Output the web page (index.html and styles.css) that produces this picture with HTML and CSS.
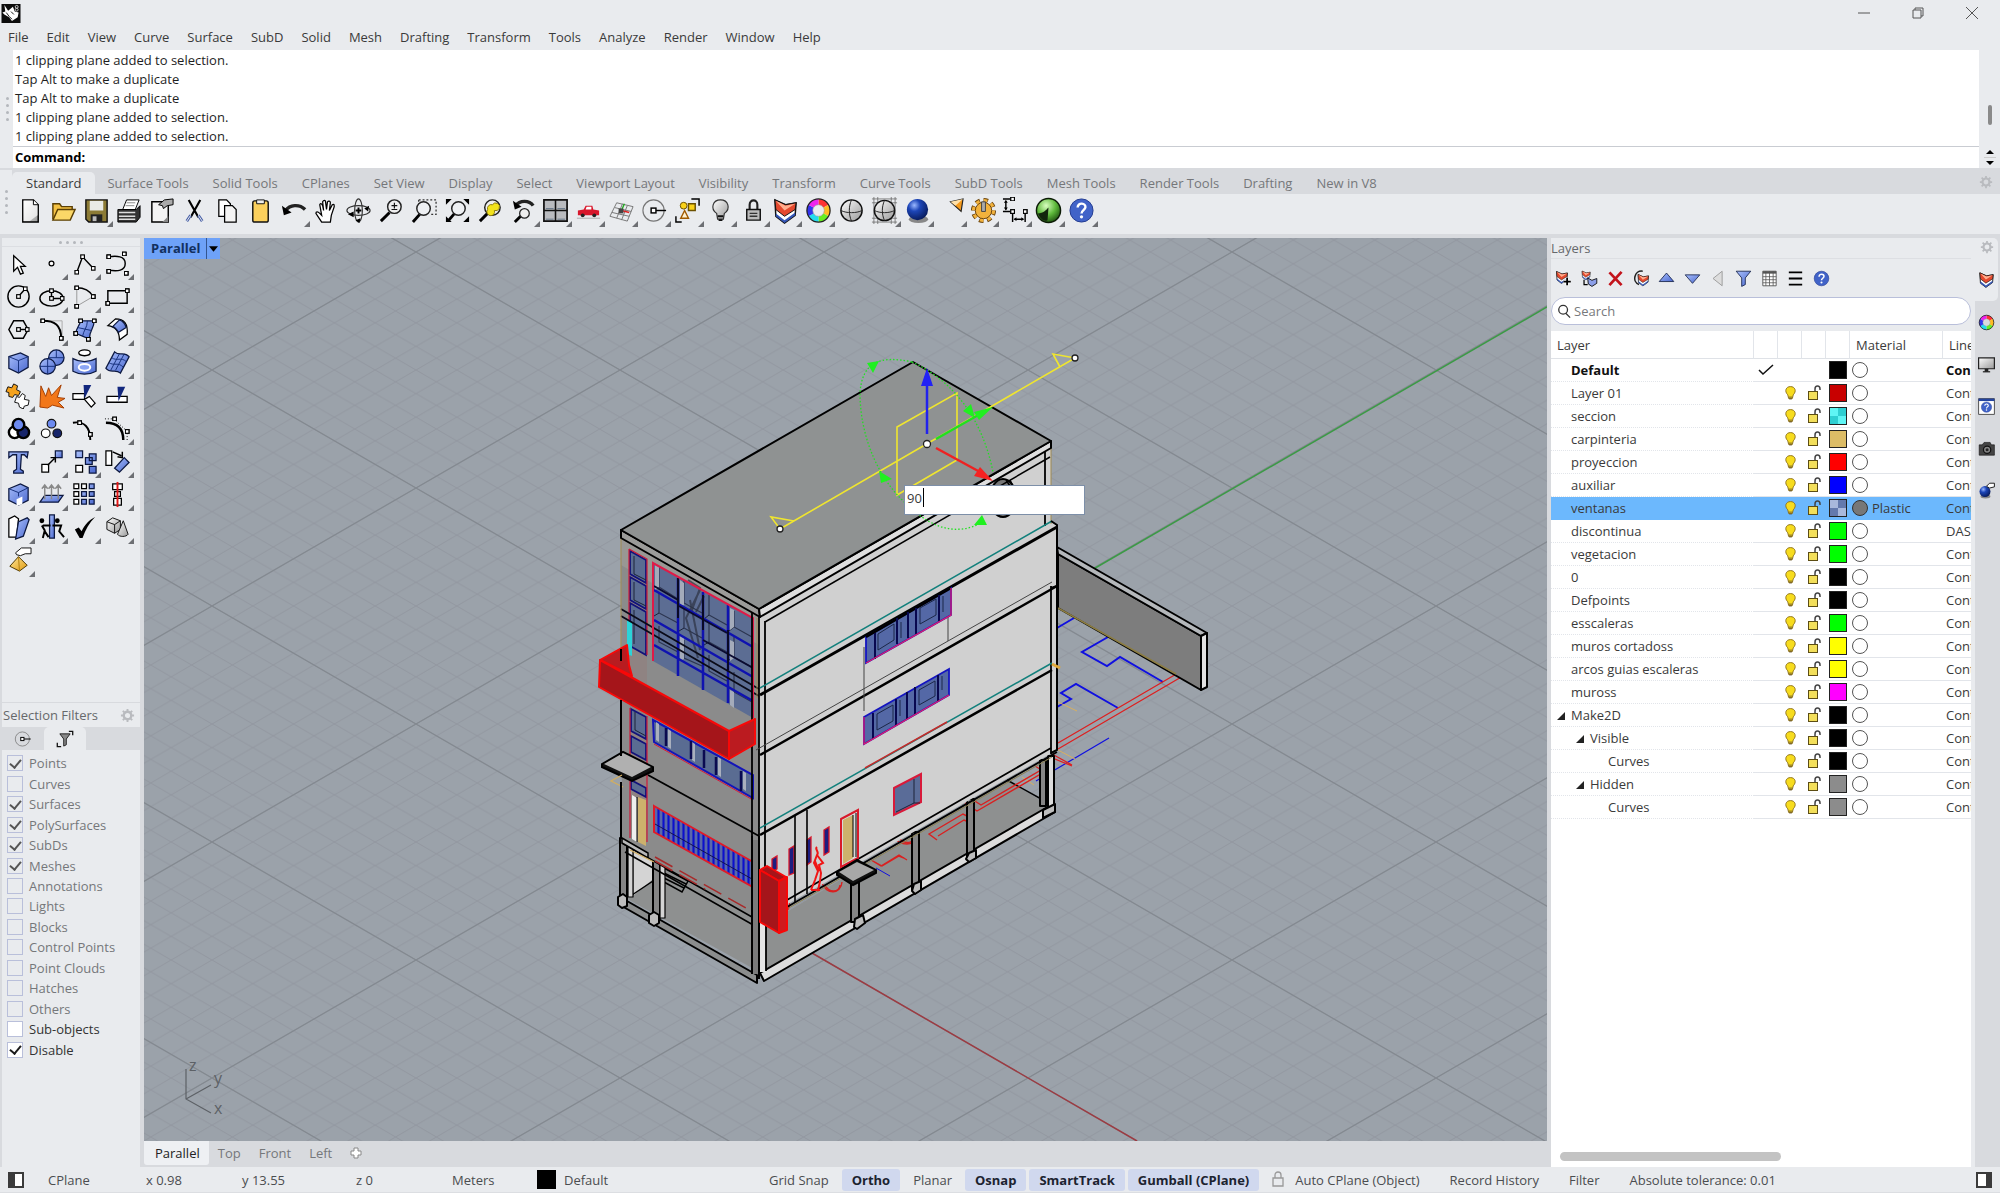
FILE: index.html
```html
<!DOCTYPE html>
<html lang="en">
<head>
  <meta charset="UTF-8">
  <meta name="viewport" content="width=device-width, initial-scale=1.0">
  <title>Rhino 8</title>
  <link rel="stylesheet" href="styles.css">
</head>
<body>

  <!-- Shared symbols -->
  <svg class="defs" aria-hidden="true">
    <defs>
      <marker id="node" viewBox="0 0 5 5" refX="2.5" refY="2.5" markerWidth="5" markerHeight="5" markerUnits="userSpaceOnUse">
        <rect x="0.6" y="0.6" width="3.8" height="3.8" fill="#fff" stroke="#000" stroke-width="1.2"/>
      </marker>
      <linearGradient id="blue" x1="0" y1="0" x2="1" y2="1"><stop offset="0" stop-color="#a9bffb"/><stop offset="1" stop-color="#4a68cf"/></linearGradient>
      <linearGradient id="grey" x1="0" y1="0" x2="1" y2="1"><stop offset="0" stop-color="#fff"/><stop offset="1" stop-color="#999"/></linearGradient>
      <linearGradient id="gold" x1="0" y1="0" x2="1" y2="1"><stop offset="0" stop-color="#ffe89a"/><stop offset="1" stop-color="#e09a10"/></linearGradient>
      <radialGradient id="ball" cx="0.35" cy="0.3" r="0.8"><stop offset="0" stop-color="#9bb8ff"/><stop offset="0.35" stop-color="#1d46b8"/><stop offset="1" stop-color="#04144e"/></radialGradient>
      <radialGradient id="green" cx="0.4" cy="0.3" r="0.8"><stop offset="0" stop-color="#d9ffc0"/><stop offset="0.5" stop-color="#5db83a"/><stop offset="1" stop-color="#123d08"/></radialGradient>
      <symbol id="i-gear" viewBox="0 0 16 16">
        <circle cx="8" cy="8" r="4" fill="none" stroke="#b9bbbf" stroke-width="2.5"/>
        <path d="M8 1v3M8 12v3M1 8h3M12 8h3M3 3l2 2M11 11l2 2M3 13l2-2M11 5l2-2" stroke="#b9bbbf" stroke-width="2"/>
      </symbol>
      <symbol id="i-layer" viewBox="0 0 28 28">
        <path d="M3 3l11 5 11-2-1 13-11 8-9-7z" fill="#fff" stroke="#111" stroke-width="1.500"/>
        <path d="M4 17l9 7 11-8v3l-11 8-9-7z" fill="#3355b5"/>
        <path d="M3 3l11 5 11-2-1 7-11 7-9-7z" fill="#e5492e" stroke="#111"/>
        <path d="M4 4l10 5 10-2-11 7z" fill="#ffae8e"/>
      </symbol>
      <symbol id="i-wheel" viewBox="0 0 28 28">
        <g fill="none" stroke-width="6">
          <path d="M14 5a9 9 0 0 1 7.800 4.500" stroke="#f33"/><path d="M21.800 9.500a9 9 0 0 1 0 9" stroke="#fb2"/>
          <path d="M21.800 18.500a9 9 0 0 1-7.800 4.500" stroke="#6e2"/><path d="M14 23a9 9 0 0 1-7.800-4.500" stroke="#2de"/>
          <path d="M6.200 18.500a9 9 0 0 1 0-9" stroke="#33e"/><path d="M6.200 9.500a9 9 0 0 1 7.800-4.500" stroke="#e2e"/>
        </g>
        <circle cx="14" cy="14" r="12" fill="none" stroke="#222" stroke-width="1.300"/>
        <circle cx="14" cy="14" r="6" fill="none" stroke="#999" stroke-width="0.600"/>
      </symbol>
      <symbol id="i-help" viewBox="0 0 28 28">
        <circle cx="14" cy="14" r="12" fill="#4163c8" stroke="#243c90"/>
        <path d="M10 11c0-6 9-5 8 0-.5 2.500-4 3-4 6" fill="none" stroke="#fff" stroke-width="2.500"/><circle cx="14" cy="20.500" r="1.700" fill="#fff"/>
      </symbol>
      <symbol id="i-ball" viewBox="0 0 28 28">
        <ellipse cx="15" cy="23" rx="10" ry="4" fill="#888"/><circle cx="14" cy="13" r="11" fill="url(#ball)"/>
      </symbol>
      <symbol id="i-osnap" viewBox="0 0 28 28">
        <circle cx="13" cy="14" r="11" fill="none" stroke="#777" stroke-width="1.200"/><path d="M13 14h13" stroke="#000" stroke-width="1.500"/>
        <rect x="10.500" y="11.500" width="5" height="5" fill="#fff" stroke="#000" stroke-width="1.500"/>
      </symbol>
      <symbol id="i-bulb" viewBox="0 0 12 16">
        <path d="M3 10C-1 6 1 1 6 1s7 5 3 9l-1 4H4z" fill="#f7dc1e" stroke="#8a6d1a"/><path d="M4 12.500h4M4.500 14.500h3" stroke="#6c5a2a"/>
      </symbol>
      <symbol id="i-unlock" viewBox="0 0 16 16">
        <path d="M9 7V4c0-4 5-4 5 0v1" fill="none" stroke="#444" stroke-width="1.500"/><rect x="2.500" y="6.500" width="9" height="8" fill="#f3df5a" stroke="#5c4d14"/>
      </symbol>
    </defs>
  </svg>

  <!-- Title bar -->
  <header class="titlebar">
    <svg class="logo" viewBox="0 0 20 20"><rect width="20" height="20" fill="#0c0c0c"/><path d="M3 1l4 6 5-4 2 5 4 1-1 5-6 4-3-4-5-3-2-2 3-1z" fill="#fff"/><path d="M5 9l3 4 3 3M10 8l3 3" stroke="#111" fill="none"/><circle cx="16" cy="3" r="1.500" fill="none" stroke="#ccc"/><circle cx="16" cy="6" r="1.500" fill="none" stroke="#ccc"/></svg>
    <div class="window-buttons">
      <button aria-label="Minimize"><svg viewBox="0 0 14 14"><path d="M1 7h12"/></svg></button>
      <button aria-label="Restore"><svg viewBox="0 0 14 14"><path d="M2 4h8v8H2zM4 4V2h8v8h-2"/></svg></button>
      <button aria-label="Close"><svg viewBox="0 0 14 14"><path d="M1 1l12 12M13 1L1 13"/></svg></button>
    </div>
  </header>

  <nav class="menu">
    <a href="#">File</a><a href="#">Edit</a><a href="#">View</a><a href="#">Curve</a><a href="#">Surface</a><a href="#">SubD</a><a href="#">Solid</a><a href="#">Mesh</a><a href="#">Drafting</a><a href="#">Transform</a><a href="#">Tools</a><a href="#">Analyze</a><a href="#">Render</a><a href="#">Window</a><a href="#">Help</a>
  </nav>

  <!-- Command history -->
  <section class="command">
    <div class="grip"><i></i><i></i><i></i><i></i></div>
    <div class="command-main">
      <div class="history">
        <p>1 clipping plane added to selection.</p>
        <p>Tap Alt to make a duplicate</p>
        <p>Tap Alt to make a duplicate</p>
        <p>1 clipping plane added to selection.</p>
        <p>1 clipping plane added to selection.</p>
      </div>
      <div class="prompt"><label for="command-line">Command:</label><input type="text" id="command-line"></div>
    </div>
    <div class="command-scroll">
      <span class="thumb"></span>
      <svg viewBox="0 0 12 20"><path d="M0 9.500h12" stroke="#ccc"/><path d="M2 6l4-4 4 4zM2 13l4 4 4-4z"/></svg>
    </div>
  </section>

  <!-- Toolbars -->
  <section class="toolbars">
    <div class="grip"><i></i><i></i><i></i><i></i></div>
    <div class="toolbars-main">
      <div class="tabs">
        <button class="tab active">Standard</button><button class="tab">Surface Tools</button><button class="tab">Solid Tools</button><button class="tab">CPlanes</button><button class="tab">Set View</button><button class="tab">Display</button><button class="tab">Select</button><button class="tab">Viewport Layout</button><button class="tab">Visibility</button><button class="tab">Transform</button><button class="tab">Curve Tools</button><button class="tab">SubD Tools</button><button class="tab">Mesh Tools</button><button class="tab">Render Tools</button><button class="tab">Drafting</button><button class="tab">New in V8</button>
        <svg class="tab-gear"><use href="#i-gear"/></svg>
      </div>
      <div class="toolbar">
        <button class="tool" aria-label="New"><svg viewBox="0 0 28 28"><path d="M6 3h11l5 5v18H6z" fill="url(#grey)" stroke="#000" stroke-width="1.500"/><path d="M6.800 3.800h9.500l5 5v10l-8 6h-6.500z" fill="#fff" opacity=".7"/><path d="M17 3v5h5" fill="#fff" stroke="#000"/></svg></button>
        <button class="tool" aria-label="Open"><svg viewBox="0 0 28 28"><path d="M3 23V7h7l2 3h11v4" fill="#f5c243" stroke="#5a3f05" stroke-width="1.500"/><path d="M3 24l5-11h18l-5 11z" fill="#fbd767" stroke="#5a3f05" stroke-width="1.500"/></svg></button>
        <button class="tool more" aria-label="Save"><svg viewBox="0 0 28 28"><path d="M3 3h22v23H6l-3-3z" fill="#8c7b35" stroke="#111" stroke-width="1.500"/><path d="M7 4h14v10H7z" fill="#e9ebe6"/><path d="M8 18h12v8H8z" fill="#222"/><path d="M10 20h4v5h-4z" fill="#bbb"/></svg></button>
        <button class="tool" aria-label="Print"><svg viewBox="0 0 28 28"><path d="M8 13l4-10h13l-4 10z" fill="#fff" stroke="#000"/><path d="M12 6h9M11 9h9" stroke="#888"/><path d="M3 13h19l4-4v12l-4 5H3z" fill="#333" stroke="#000"/><path d="M4 16h17M4 20h17M4 23h17" stroke="#ddd" stroke-width="1.500"/></svg></button>
        <button class="tool" aria-label="Document properties"><svg viewBox="0 0 28 28"><path d="M4 5h17v21H4z" fill="#f4f4f4" stroke="#000" stroke-width="1.500"/><path d="M21 20l-6 6h6z" fill="#888"/><path d="M11 8l6-5 9-1v6l-6 1-4 3-1-3z" fill="#aaa" stroke="#000"/></svg></button>
        <button class="tool" aria-label="Cut"><svg viewBox="0 0 28 28"><path d="M8 3l10 18M20 3L10 21" stroke="#000" stroke-width="2.200"/><path d="M10 19l-4 6M18 19l4 6" stroke="#4961a8" stroke-width="3"/><path d="M10 19l-4 6M18 19l4 6" stroke="#e8eaee" stroke-width="1"/></svg></button>
        <button class="tool" aria-label="Copy"><svg viewBox="0 0 28 28"><path d="M5 3h8l4 4v13H5z" fill="#fff" stroke="#000" stroke-width="1.300"/><path d="M11 9h8l4 4v13H11z" fill="#f4f4f4" stroke="#000" stroke-width="1.300"/></svg></button>
        <button class="tool" aria-label="Paste"><svg viewBox="0 0 28 28"><rect x="6" y="4" width="16" height="22" rx="2" fill="#fbd05c" stroke="#111" stroke-width="1.500"/><path d="M10 3h8v4h-8z" fill="#eee" stroke="#111"/></svg></button>
        <button class="tool more" aria-label="Undo"><svg viewBox="0 0 28 28"><path d="M6 14c4-6 14-7 20-1" fill="none" stroke="#222" stroke-width="3.500"/><path d="M2 9l2 10 8-3z"/></svg></button>
        <button class="tool" aria-label="Pan"><svg viewBox="0 0 28 28"><path d="M9 26l-6-9c0-2 2-2 4 0l2 2-2-11c1-2 2-1 3 1l1 5-1-9c1-2 3-2 3 0l1 8 1-8c1-1 3-1 3 1l-1 8 3-6c2-1 2 0 2 2l-3 9-1 7z" fill="#fff" stroke="#000" stroke-width="1.300"/></svg></button>
        <button class="tool" aria-label="Rotate view"><svg viewBox="0 0 28 28"><g fill="none" stroke="#333" stroke-width="1.200"><ellipse cx="14" cy="14" rx="12" ry="5"/><ellipse cx="14" cy="14" rx="4" ry="12"/></g><path d="M11 14h6M14 11v6" stroke="#000" stroke-width="2"/><path d="M3 18l6-3v6zM25 9l-5 3 4 3zM11 24l5-2-1 5z"/></svg></button>
        <button class="tool" aria-label="Zoom dynamic"><svg viewBox="0 0 28 28"><path d="M12 16l-9 9" stroke="#000" stroke-width="3"/><circle cx="17" cy="10" r="7" fill="#eee" stroke="#222" stroke-width="1.500"/><path d="M14 9h6M17 6v6M14 13h6" stroke="#111" stroke-width="1.200"/></svg></button>
        <button class="tool" aria-label="Zoom window"><svg viewBox="0 0 28 28"><path d="M8 3h18v15h-6M8 3v6" fill="none" stroke="#333" stroke-width="1.300" stroke-dasharray="2 2"/><path d="M9 18l-7 8" stroke="#000" stroke-width="3"/><circle cx="13" cy="12" r="7" fill="#eef0f3" stroke="#222" stroke-width="1.500"/></svg></button>
        <button class="tool" aria-label="Zoom extents"><svg viewBox="0 0 28 28"><path d="M11 17l-6 7" stroke="#000" stroke-width="3"/><circle cx="15" cy="12" r="7" fill="#eef0f3" stroke="#222" stroke-width="1.500"/><path d="M2 2h6L2 8zM26 2h-6l6 6zM2 26h6l-6-6zM26 26h-6l6-6z"/></svg></button>
        <button class="tool" aria-label="Zoom selected"><svg viewBox="0 0 28 28"><path d="M11 17l-8 8" stroke="#000" stroke-width="3"/><circle cx="16" cy="11" r="8" fill="#eee" stroke="#222" stroke-width="1.500"/><path d="M11 13a4 4 0 0 1 5-5a4 4 0 1 1 2 6a4 4 0 1 1-7-1z" fill="#f2e21c" stroke="#8a7a10"/></svg></button>
        <button class="tool more" aria-label="Undo view"><svg viewBox="0 0 28 28"><path d="M6 9c4-6 14-6 18 0" fill="none" stroke="#222" stroke-width="3.500"/><path d="M3 4l2 9 7-3z"/><path d="M11 20l-6 6" stroke="#000" stroke-width="3"/><circle cx="15" cy="17" r="5" fill="#eee" stroke="#222" stroke-width="1.300"/></svg></button>
        <button class="tool more" aria-label="4 viewports"><svg viewBox="0 0 28 28"><path d="M2 3h24v22H2z" fill="#b9bbbf" stroke="#111" stroke-width="1.800"/><path d="M14 3v22M2 14h24" stroke="#111" stroke-width="1.600"/><path d="M4 12h8M16 12h8M4 23h8M16 23h8" stroke="#678" stroke-width="1"/></svg></button>
        <button class="tool more" aria-label="Set view"><svg viewBox="0 0 28 28"><path d="M3 14l6-1 2-4h7l1 4 6 1v5H3z" fill="#d8172c"/><path d="M12 10h5v3h-6z" fill="#fff"/><circle cx="8" cy="19" r="2" fill="#222"/><circle cx="20" cy="19" r="2" fill="#222"/><path d="M2 22h24" stroke="#aaa"/></svg></button>
        <button class="tool more" aria-label="Set CPlane"><svg viewBox="0 0 28 28"><path d="M9 6l17 4-6 15-18-5zM15 7L9 22M20 9l-6 15M7 11l17 4M4 16l18 4" fill="none" stroke="#777"/><path d="M14 14l8 2" stroke="#d22" stroke-width="1.500"/><path d="M14 14l3-7" stroke="#2a2" stroke-width="1.500"/><rect x="11" y="12" width="5" height="5" fill="#444"/></svg></button>
        <button class="tool more" aria-label="Osnap"><svg><use href="#i-osnap"/></svg></button>
        <button class="tool more" aria-label="Select"><svg viewBox="0 0 28 28"><path d="M18 2h8v7M2 20v6h6" fill="none" stroke="#000" stroke-width="1.500"/><circle cx="10" cy="9" r="3.500" fill="#fad21a" stroke="#6b5000"/><path d="M15 7h7v7h-7z" fill="#fad21a" stroke="#6b5000" stroke-width="1.500"/><path d="M7 22l4-8 4 8z" fill="#fff0d0" stroke="#a05a00" stroke-width="1.500"/></svg></button>
        <button class="tool more" aria-label="Hide"><svg viewBox="0 0 28 28"><path d="M10 17c-7-5-4-14 4-14s11 9 4 14l-1 6h-6z" fill="url(#grey)" stroke="#333" stroke-width="1.200"/><path d="M11 20h6M12 24h4" stroke="#111" stroke-width="2"/></svg></button>
        <button class="tool more" aria-label="Lock"><svg viewBox="0 0 28 28"><path d="M10 13V8c0-6 8-6 8 0v5" fill="none" stroke="#222" stroke-width="2.200"/><path d="M7 13h14v11H7z" fill="#bbb" stroke="#111" stroke-width="1.500"/><path d="M10 17h8M10 20h8" stroke="#333" stroke-width="1.500"/></svg></button>
        <button class="tool more" aria-label="Layers"><svg><use href="#i-layer"/></svg></button>
        <button class="tool more" aria-label="Properties"><svg><use href="#i-wheel"/></svg></button>
        <button class="tool" aria-label="Shade"><svg viewBox="0 0 28 28"><circle cx="14" cy="14" r="11" fill="url(#grey)" stroke="#111" stroke-width="1.500"/><path d="M3 14c6 3 16 3 22 0M14 3c-3 7-3 15 0 22" fill="none" stroke="#222"/></svg></button>
        <button class="tool more" aria-label="Shade options"><svg viewBox="0 0 28 28"><path d="M1 2h26M1 6h26M1 22h26M1 26h26M3 0v28M7 0v28M21 0v28M25 0v28" stroke="#666" stroke-width=".8"/><circle cx="14" cy="14" r="10.500" fill="url(#grey)" stroke="#111" stroke-width="1.500"/><path d="M3.500 14c6 3 15 3 21 0M14 3.500c-3 7-3 14 0 21" fill="none" stroke="#222"/></svg></button>
        <button class="tool more" aria-label="Render"><svg><use href="#i-ball"/></svg></button>
        <button class="tool more" aria-label="Spotlight"><svg viewBox="0 0 28 28"><path d="M14 5l13-3-2 13z" fill="#f59a1c" stroke="#222" stroke-width="1.200"/><path d="M14 5l13-3-8 7z" fill="#ffe0a8"/></svg></button>
        <button class="tool more" aria-label="Options"><svg viewBox="0 0 28 28"><circle cx="14" cy="14" r="10.500" fill="none" stroke="#6b430a" stroke-width="5" stroke-dasharray="4.500 3.700"/><circle cx="14" cy="14" r="10" fill="none" stroke="#f2b23c" stroke-width="4" stroke-dasharray="3.500 4.350"/><circle cx="14" cy="14" r="8.500" fill="#f2b23c" stroke="#6b430a"/><path d="M12 5h4v10h-4z" fill="#aaa" stroke="#444"/></svg></button>
        <button class="tool more" aria-label="Dimensions"><svg viewBox="0 0 28 28"><path d="M1 2h10M1 15h10M4 4v9M11 15v11M24 15v11M13 23h9" fill="none" stroke="#000" stroke-width="1.500"/><path d="M2 6l2-3 2 3zM2 11l2 3 2-3zM15 21l-3 2 3 2zM20 21l3 2-3 2z"/><path d="M11 2v.1M11 15v.1M24 15v.1" class="pts"/></svg></button>
        <button class="tool more" aria-label="Grasshopper"><svg viewBox="0 0 28 28"><circle cx="14" cy="14" r="12.500" fill="url(#green)" stroke="#0b1a05" stroke-width="1.500"/><path d="M3 17c6 0 8-3 11-6l-1 13c-4 2-8-2-10-7z" fill="#12240c"/></svg></button>
        <button class="tool more" aria-label="Help"><svg><use href="#i-help"/></svg></button>
      </div>
    </div>
  </section>

  <main class="workspace">

    <!-- Left side tools -->
    <aside class="sidebar">
      <div class="grip horizontal"><i></i><i></i><i></i><i></i></div>
      <div class="side-tools">
        <button class="tool"><svg viewBox="0 0 28 28"><path d="M9 6v16l4-4 3 7 3-1-3-7h5z" class="w"/></svg></button>
        <button class="tool more"><svg viewBox="0 0 28 28"><circle cx="14" cy="14" r="2.500" class="w"/></svg></button>
        <button class="tool more"><svg viewBox="0 0 28 28"><path d="M6 23l6-16 11 12" class="k pts"/></svg></button>
        <button class="tool more"><svg viewBox="0 0 28 28"><path d="M5 7c8-1 17-1 17 7s-8 8-17 7" class="k"/><path d="M5 7v.1M5 22v.1M21 4v.1M23 24v.1" class="pts"/></svg></button>
        <button class="tool more"><svg viewBox="0 0 28 28"><circle cx="14" cy="14" r="11" class="k"/><path d="M14 14l7-8" class="k pts"/></svg></button>
        <button class="tool more"><svg viewBox="0 0 28 28"><ellipse cx="14" cy="16" rx="12" ry="8" class="k"/><path d="M14 8v8h11" class="k pts"/></svg></button>
        <button class="tool more"><svg viewBox="0 0 28 28"><path d="M6 24l17-10M6 5v19" stroke="#999"/><path d="M6 5c8 0 14 4 17 9" class="k"/><path d="M6 5v.1M6 24v.1M23 14v.1" class="pts"/></svg></button>
        <button class="tool more"><svg viewBox="0 0 28 28"><path d="M4 8h20v13H4z" class="k"/><path d="M24 8v.1M4 21v.1" class="pts"/></svg></button>
        <button class="tool more"><svg viewBox="0 0 28 28"><path d="M4 14l5-9h10l5 9-5 9H9z" class="k"/><path d="M14 14h9" class="k pts"/></svg></button>
        <button class="tool more"><svg viewBox="0 0 28 28"><path d="M5 5h20v18" fill="none" stroke="#aaa"/><path d="M5 5c12 0 19 4 19 18" fill="none" stroke="#000" stroke-width="2"/><path d="M5 5v.1M24 23v.1" class="pts"/></svg></button>
        <button class="tool more"><svg viewBox="0 0 28 28"><path d="M10 5h14c0 9-5 9-5 19L5 18c0-5 4-8 5-13z" class="b"/><path d="M17 5c0 7-4 10-5 16M7 12l14 3" stroke="#16307c" fill="none"/><path d="M10 5v.1M24 5v.1M18 24v.1M5 18v.1" class="pts"/></svg></button>
        <button class="tool more"><svg viewBox="0 0 28 28"><path d="M4 10l8-7c9 0 13 5 12 16l-8 6c0-9-4-14-12-15z" class="w"/><path d="M9 11l7-7c3 1 6 4 7 8l-8 5c-1-2-3-5-6-6z" class="b"/></svg></button>
        <button class="tool more"><svg viewBox="0 0 28 28"><path d="M4 8l12-4 8 4v11l-10 6-10-5z" class="b"/><path d="M4 8l10 4 10-4M14 12v12" fill="none" stroke="#16307c"/></svg></button>
        <button class="tool more"><svg viewBox="0 0 28 28"><circle cx="19" cy="9" r="8" class="b"/><circle cx="10" cy="18" r="8" class="b"/><path d="M2 18h16M10 10v16M11 9h16M19 1v8" stroke="#16307c" fill="none"/></svg></button>
        <button class="tool more"><svg viewBox="0 0 28 28"><ellipse cx="14" cy="4" rx="6" ry="3" class="w"/><path d="M2 10c7 4 17 4 24 0v13c-7 4-17 4-24 0z" class="b"/><ellipse cx="14" cy="19" rx="6" ry="3.500" fill="#8ba6f5" stroke="#fff" stroke-width="2"/></svg></button>
        <button class="tool more"><svg viewBox="0 0 28 28"><path d="M11 3c5 5 10-1 15 5l-9 17c-5-5-10 1-15-5z" class="b"/><path d="M16 5L7 22M21 5l-9 17M8 9c5 4 10-1 15 4M5 14c5 4 10-1 15 5" stroke="#16307c" fill="none"/></svg></button>
        <button class="tool more"><svg viewBox="0 0 28 28"><path d="M3 5l4 1 2-4 4 2-1 4 4 2-2 4-4-1-2 3-4-1V11l-3-1z" fill="#f5a21c" stroke="#111"/><path d="M12 15l3 1 3-4 3 2-1 4 5 1-1 5-4 1-1 3-4-2-1-4-4-1z" fill="#fff" stroke="#111"/></svg></button>
        <button class="tool"><svg viewBox="0 0 28 28"><path d="M2 26l1-22 5 11 3-9 3 8L24 3l-4 13 8 1-7 4 6 6-12-3-5 3z" fill="#f2771a" stroke="#a33c00"/></svg></button>
        <button class="tool"><svg viewBox="0 0 28 28"><path d="M2 12h12v6H2zM14 18l5-3 6 7-4 4z" class="w"/><path d="M13 3h8l-7 14z" fill="#12277e"/></svg></button>
        <button class="tool"><svg viewBox="0 0 28 28"><path d="M3 15h21v6H3z" class="w"/><path d="M14 5h8l-7 15z" fill="#12277e"/></svg></button>
        <button class="tool more"><svg viewBox="0 0 28 28"><g stroke="#000" stroke-width="2.500"><circle cx="10" cy="18" r="6" fill="#fff"/><circle cx="19" cy="18" r="6" fill="#16246a"/><circle cx="14" cy="10" r="6" fill="#6c8af0"/></g></svg></button>
        <button class="tool"><svg viewBox="0 0 28 28"><g stroke="#111" stroke-width="1.200"><circle cx="8" cy="19" r="4.500" fill="#fff"/><circle cx="20" cy="19" r="4.500" fill="#16246a"/><circle cx="14" cy="9" r="4.500" fill="#6c8af0"/></g></svg></button>
        <button class="tool"><svg viewBox="0 0 28 28"><path d="M2 8c12-2 18 5 18 18" fill="none" stroke="#000" stroke-width="2"/><path d="M9 8v.1M20 20v.1" class="pts"/></svg></button>
        <button class="tool more"><svg viewBox="0 0 28 28"><path d="M2 8c12 0 18 6 18 18" fill="none" stroke="#000" stroke-width="2.500"/><path d="M1 4h9l14 13v9" fill="none" stroke="#000" stroke-dasharray="1 2"/><path d="M11 4v.1M24 17v.1" class="pts"/></svg></button>
        <button class="tool"><svg viewBox="0 0 28 28"><path d="M4 4h20l-1 6-3-3h-3l-1 15 3 2v2H9v-2l3-2V7H8l-4 3z" class="b"/></svg></button>
        <button class="tool more"><svg viewBox="0 0 28 28"><path d="M4 17h7v8H4z" class="w"/><path d="M18 3h7v7h-7z" class="b"/><path d="M10 18l7-7M13 10h5v5" class="k"/></svg></button>
        <button class="tool more"><svg viewBox="0 0 28 28"><path d="M5 3h7v7H5zM19 6h7v7h-7zM15 10h7v7h-7zM19 19h7v7h-7z" class="b"/><path d="M5 18h7v7H5z" class="w"/></svg></button>
        <button class="tool more"><svg viewBox="0 0 28 28"><path d="M2 3h6v15H2z" class="w"/><path d="M9 4l9 4M19 4v6l-5-1" class="k"/><path d="M11 21l10-11 5 5-10 10z" class="b"/></svg></button>
        <button class="tool more"><svg viewBox="0 0 28 28"><path d="M4 8l12-5 8 4v13l-10 5-10-5z" class="b"/><path d="M4 8l10 4 10-5M14 12v4" fill="none" stroke="#16307c"/><path d="M12 19l6-3v8l-6 2z" fill="#fff"/></svg></button>
        <button class="tool more"><svg viewBox="0 0 28 28"><path d="M7 15h19l-5 7H2z" class="b"/><path d="M7 19V5M14 19V5M21 19V5M4 8l3-4 3 4M11 8l3-4 3 4M18 8l3-4 3 4" fill="none" stroke="#888" stroke-width="1.500"/></svg></button>
        <button class="tool more"><svg viewBox="0 0 28 28"><path d="M3 3h5v5H3zM11 3h5v5h-5zM3 11h5v5H3zM3 19h5v5H3z" class="w"/><path d="M19 3h5v5h-5zM11 11h5v5h-5zM19 11h5v5h-5zM11 19h5v5h-5zM19 19h5v5h-5z" class="b"/></svg></button>
        <button class="tool more"><svg viewBox="0 0 28 28"><path d="M9 3h10v6H9zM11 11h6v5h-6zM10 18h8v7h-8z" class="w"/><path d="M14 1v26" stroke="#e01515" stroke-width="2"/></svg></button>
        <button class="tool more"><svg viewBox="0 0 28 28"><path d="M4 5l6-3 4 3-2 19H4z" class="w"/><path d="M14 8l9-4 2 2-6 17-8 3z" class="b"/></svg></button>
        <button class="tool more"><svg viewBox="0 0 28 28"><path d="M12 1h5v24h-5z" class="b"/><circle cx="4" cy="7" r="2.500"/><circle cx="20" cy="7" r="2.500"/><path d="M4 12l3 5-2 8M5 12h8M15 12h9l-2 6 5 6M7 18l4 6" fill="none" stroke="#000" stroke-width="2"/></svg></button>
        <button class="tool more"><svg viewBox="0 0 28 28"><path d="M4 16l4-2 3 4c3-7 8-12 14-15-6 6-10 13-13 22h-3z"/></svg></button>
        <button class="tool more"><svg viewBox="0 0 28 28"><path d="M3 8l6-4 8 3v9l-6 4-8-4z" fill="url(#grey)" stroke="#111"/><path d="M3 8l8 3 6-4M11 11v9" fill="none" stroke="#111"/><path d="M14 21l6-14 5 14c-2 3-9 3-11 0z" fill="url(#grey)" stroke="#111"/></svg></button>
        <button class="tool more"><svg viewBox="0 0 28 28"><path d="M5 20l9-10 9 9-8 6z" fill="url(#gold)" stroke="#4d3600"/><path d="M14 10l1 15" stroke="#b07f10"/><path d="M11 6l6-5h10v6h-6l-5 2-4-1z" fill="#fff" stroke="#111"/></svg></button>
      </div>

      <section class="filters">
        <h2>Selection Filters <svg><use href="#i-gear"/></svg></h2>
        <div class="filter-tabs">
          <button aria-label="Osnap"><svg><use href="#i-osnap"/></svg></button>
          <button class="active" aria-label="Filters"><svg viewBox="0 0 28 28"><path d="M6 6h16l-6 8v9l-4 2V14z" fill="#888" stroke="#222" stroke-width="1.500"/><path d="M20 2h6v6M2 20v6h6" fill="none" stroke="#111" stroke-width="2"/></svg></button>
        </div>
        <div class="filter-list">
          <label class="off"><input type="checkbox" checked>Points</label>
          <label class="off"><input type="checkbox">Curves</label>
          <label class="off"><input type="checkbox" checked>Surfaces</label>
          <label class="off"><input type="checkbox" checked>PolySurfaces</label>
          <label class="off"><input type="checkbox" checked>SubDs</label>
          <label class="off"><input type="checkbox" checked>Meshes</label>
          <label class="off"><input type="checkbox">Annotations</label>
          <label class="off"><input type="checkbox">Lights</label>
          <label class="off"><input type="checkbox">Blocks</label>
          <label class="off"><input type="checkbox">Control Points</label>
          <label class="off"><input type="checkbox">Point Clouds</label>
          <label class="off"><input type="checkbox">Hatches</label>
          <label class="off"><input type="checkbox">Others</label>
          <label><input type="checkbox">Sub-objects</label>
          <label><input type="checkbox" checked>Disable</label>
        </div>
      </section>
    </aside>

    <!-- Viewport -->
    <section class="center">
      <div class="viewport">
        <svg class="scene" viewBox="144 238 1403 903" preserveAspectRatio="xMinYMin slice">
          <defs>
            <pattern id="minor" x="212" y="1078" width="40.800" height="23.600" patternUnits="userSpaceOnUse"><path d="M0 0L40.800 23.600M0 23.600L40.800 0" stroke="#9297a0" stroke-width="1"/></pattern>
            <pattern id="major" x="212" y="1078" width="408" height="236" patternUnits="userSpaceOnUse"><path d="M0 0L408 236M0 236L408 0" stroke="#838990" stroke-width="1.200"/></pattern>
            <pattern id="bars" width="5" height="10" patternUnits="userSpaceOnUse"><rect width="5" height="10" fill="#2b38b8"/><path d="M1 0v10" stroke="#6a76a8" stroke-width="1.500"/><path d="M3.500 0v10" stroke="#0d0dd0" stroke-width="1"/></pattern>
          </defs>
          <rect x="144" y="238" width="1403" height="903" fill="#9ba2aa"/>
          <rect x="144" y="238" width="1403" height="903" fill="url(#minor)"/>
          <rect x="144" y="238" width="1403" height="903" fill="url(#major)"/>
          <path d="M1090 571L1547 307" stroke="#3b9a45" stroke-width="1.500"/>
          <path d="M812 953l325 188" stroke="#9c3b42" stroke-width="1.500"/>

          <!-- site lines -->
          <g fill="none" stroke="#1010e0" stroke-width="2">
            <path d="M1057 628l17-10M1108 637l-26 15 25 14 13-9 43 25M1057 707l14-8-10-6 15-9 42 24"/>
            <path d="M1036 781l73-43" stroke-width="1.200"/>
          </g>
          <path d="M1058 743l120-70M1058 749l125-73M1050 757l22 9M1052 754l20 11" fill="none" stroke="#dd2020" stroke-width="1.300"/>
          <path d="M1058 702l19 9M1058 750l17 9M1022 777l12 8" stroke="#d8b060"/>

          <!-- free wall -->
          <g stroke="#000" stroke-width="2" stroke-linejoin="round">
            <path d="M1058 554l143 82v54l-143-82z" fill="#7d7d7d"/>
            <path d="M1057 547l150 86-6 3-143-82z" fill="#b5b8bb"/>
            <path d="M1201 636l6-3v54l-6 3z" fill="#e2e2e2"/>
            <path d="M1058 608l118 66" stroke="#8c7d42" stroke-width="1.500"/>
          </g>

          <!-- ground floor -->
          <path d="M622 896V843l30 17 113 65 242-145 43 26-287 168z" fill="#8e9090"/>
          <path d="M634 850l24 14v11l-24 20z" fill="#d4d4d4"/>
          <path d="M632 895l30-20M1007 780l36 20" stroke="#000" stroke-width="1.500"/>
          <path d="M664 868l24 13-6 11-18-10M664 873l22 11M664 878l20 10" fill="none" stroke="#000" stroke-width="1.500"/>
          <g fill="none" stroke="#d92020" stroke-width="1.400">
            <path d="M1053 763l-72 42-14-9M1051 768l-74 43-12-8M1035 766l16 10"/>
            <path d="M971 818l-8-4-34 20 8 6M971 823l-7-3-26 16M907 860l-8-5-18 11-10-6M904 858l-5-2-17 10-9-5M895 838c5 8 20 8 20 0M898 836c4 10 20 8 18-3"/>
            <path d="M825 885c4 8 14 8 15 0M822 883c4 12 19 12 20-1M787 900c6 4 0 14-6 13"/>
          </g>
          <path d="M876 868l14 8" stroke="#1010e0"/>

          <g stroke="#000" stroke-width="2" stroke-linejoin="round">
            <path d="M620 897l137 78v8L620 905z" fill="#8b8d8d"/>
            <path d="M760 973l291-168 4 7-291 169z" fill="#dcdcdc"/>
            <path d="M620 838h7v60h-7zM653 858h7v60h-7z" fill="#858585"/>
            <path d="M628 845h5v52h-5zM660 862h5v56h-5z" fill="#d4d4d4" stroke-width="1.200"/>
            <path d="M851 880h8v42h-8zM912 832h7v58h-7zM967 799h7v58h-7zM1040 760h6v46h-6z" fill="#858585"/>
            <path d="M1048 756h6v54h-6z" fill="#dcdcdc"/>
            <path d="M618 897l5-3 4 3v9l-5 2-4-3zM649 915l5-3 5 3v8l-5 3-5-3zM855 919l8-4 2 8-8 6-3-2zM914 884l7-3v9l-6 4-3-3zM969 853l7-3v8l-7 4-3-3zM1043 810l12-6v8l-12 6z" fill="#bdbdbd"/>
          </g>

          <!-- left facade -->
          <path d="M621 535l138 80v306l-137-78z" fill="#8b8b8b"/>
          <path d="M621 535l138 80v30l-138-80z" fill="#999794"/>
          <path d="M622 843l137 78M625 852l130 74" stroke="#000" stroke-width="1.500"/>
          <path d="M655 857l100 56M655 861l50 28" stroke="#a82a2a" stroke-width="1.500" stroke-dasharray="20 8"/>
          <path d="M629 549l18 10v284l-17-9z" fill="#8f8382"/>
          <path d="M630 551l16 9v23l-16-9zM630 577l16 9v23l-16-9zM630 603l16 9v43l-16-9zM631 709l15 8v22l-15-8zM631 736l15 8v16l-15-8zM631 780l15 8v9l-15-8z" fill="#5a6c92" stroke="#12127a" stroke-width="1.800"/>
          <path d="M634 556v18l12 6M634 582v18l12 6M634 610v34M635 712v18l11 6" fill="none" stroke="#1c2338"/>
          <path d="M629 549l18 10v96M629 549v95M647 716v126M630 708v130" fill="none" stroke="#d0193a" stroke-width="1.200"/>
          <path d="M632 795l5 3v44l-5-3z" fill="#eee"/><path d="M638 797l8 3v46l-8-4z" fill="#cdb16c"/><path d="M637 797v45" stroke="#000"/>
          <path d="M627 620v34l5 2v-34z" fill="#2bd3d8"/>

          <path d="M653 563l100 55v100l-100-57z" fill="#5c6d93"/>
          <g stroke="#2c3550" stroke-width="1.200" fill="none">
            <path d="M659 567v20l19 12M684 581v22l18 10M709 595v20l18 10M734 611v16l18 10M659 593v20l19 10M684 608v20l18 10M709 622v20l18 10M734 637v20l18 10M659 626v16l19 10M684 640v18l18 8M709 655v16l18 10M734 672v20l18 10"/>
          </g>
          <path d="M659 587l-5 4M684 603l-5 3M709 615l-5 4M734 627l-5 4M659 613l-5 3M684 628l-5 3M709 642l-5 3M734 657l-5 3" stroke="#1c2338"/>
          <path d="M688 580l12 8-8 22M700 590l-14 28 12 40M690 600l10 50M704 596l-8 16" stroke="#2c3242" stroke-width="2" fill="none" opacity=".7"/>
          <path d="M655 565l4 2v20l-4 4zM680 580l4 3v22l-4 2zM730 608l4 2v17l-4 3zM730 640l4 2v16l-4 3zM680 634l4 3v22l-4 2zM730 690l4 2v16l-4-3z" fill="#a4abba"/>
          <g fill="none" stroke="#0f12b0" stroke-width="2.500">
            <path d="M654 590l99 57M654 620l99 57M654 645l99 56M678 578v98M703 592v98M728 605v98"/>
          </g>
          <path d="M654 586l24 14M679 606l48 27M703 640l50 28" stroke="#0a0a30" stroke-width="2"/>
          <path d="M621 609l138 80M621 616l138 80M678 578v40M703 595v35M728 630v40" stroke="#0a0a18" stroke-width="1.800"/>
          <path d="M653 661v-98l100 55v100" fill="none" stroke="#e01a48" stroke-width="2"/>

          <path d="M653 720l100 55v23l-99-56z" fill="#5a6c92" stroke="#1414b8" stroke-width="2"/>
          <path d="M656 722l3 2v18l-3-2zM668 729l3 2v18l-3-2zM692 742l3 2v18l-3-2zM718 757l3 2v18l-3-2zM743 771l3 2v18l-3-2z" fill="#a9afbd"/>
          <path d="M666 728v18M691 741v18M704 750v18M716 757v18M741 771v20" stroke="#0b0b50" stroke-width="2.500"/>
          <path d="M654 744l99 56" stroke="#d81a3a"/>
          <path d="M654 806l99 56v25l-99-55z" fill="url(#bars)" stroke="#e01a28" stroke-width="2"/>
          <path d="M655 824l97 55" stroke="#101050"/>
          <path d="M648 775l111 61" stroke="#000" stroke-width="1.800"/>

          <!-- right facade -->
          <path d="M759 615l292-169v75l6 4v225l-292 167-6 3z" fill="#d0d0d0"/>
          <path d="M765 621V921M752 612v362M759 617v362M1045 452v74M1051 586v168" stroke="#000" stroke-width="1.800" fill="none"/>
          <path d="M753 840h5v134h-5z" fill="#7b7b7b"/><path d="M760 900h6v72h-6z" fill="#e4e4e4"/>
          <path d="M766 921v50M752 836v138M759 836v143" stroke="#000" stroke-width="1.800"/>
          <path d="M757 618v80M1051 448v76M1057 525v60M621 538v110" stroke="#a08a50"/>
          <path d="M760 695l297-168" stroke="#000" stroke-width="3"/>
          <path d="M760 755l297-169M760 835l292-165" stroke="#000" stroke-width="2.500"/>
          <path d="M760 688l292-167M760 828l292-165" stroke="#12807c" stroke-width="1.500"/>
          <path d="M756 750l296-168M864 647v64M948 615v26" stroke="#444" fill="none"/>
          <path d="M865 768l82-46" stroke="#c52a2a" stroke-width="1.500"/>
          <path d="M1051 521l6 4v225l-6 3M1057 586l-6 2" fill="none" stroke="#000" stroke-width="2"/>
          <path d="M787 900l264-152M787 907l270-155" stroke="#000" stroke-width="1.800"/>
          <path d="M787 909l265-152" stroke="#8c8050"/>

          <g fill="#5468a6" stroke="#1414c0" stroke-width="1.800">
            <path d="M866 637l85-49v27l-85 48z"/><path d="M864 717l85-48v26l-85 49z"/>
          </g>
          <path d="M866 637l85-49" stroke="#000" stroke-width="2.500"/>
          <path d="M875 633v26M897 618v26M908 612v26M916 608v26M939 595v26M873 713v26M896 699v27M907 692v27M915 687v27M938 675v26" stroke="#080850" stroke-width="2"/>
          <path d="M878 634l16-10v16l-16 10zM920 608l16-9v16l-16 9zM877 714l16-9v16l-16 9zM919 690l16-9v15l-16 9zM901 622v16M943 596v16M900 700v16M942 676v14" fill="none" stroke="#1b2748"/>
          <path d="M866 663l85-48v-27M864 717v27l85-49" fill="none" stroke="#e01a70" stroke-width="1.300"/>
          <path d="M894 788l27-14v28l-27 13z" fill="#5a6c98" stroke="#d81a3a" stroke-width="2"/>
          <path d="M896 812l18-9 6 0M914 803v-24" fill="none" stroke="#1c2338"/>
          <path d="M841 819l17-9v48l-17 9z" fill="#d9d9d9" stroke="#d81a2a" stroke-width="2"/>
          <path d="M843 820l10-5v43l-10 6z" fill="#cdb16c"/><path d="M853 815v42M856 813v44" stroke="#000"/>
          <g fill="#1d1d80" stroke="#d81a2a" stroke-width="1.300">
            <path d="M772 859l5-3v13l-5 3zM789 849l5-3v27l-5 2zM807 840l4-3v25l-4 3zM824 830l5-3v25l-5 3z"/>
          </g>
          <path d="M795 815v88M807 810v84" stroke="#000" stroke-width="1.600"/>
          <path d="M817 847c-3 2 3 5 0 8l-3 8 4 8-3 9-4 10M817 855l6 8-4 2 2 8-1 8-2 10M815 861l4 10M811 890h9" fill="none" stroke="#f01515" stroke-width="2"/>
          <path d="M837 872l20-12 19 10v3l-23 12-16-10z" fill="#111" stroke="#000" stroke-width="2"/><path d="M839 872l18-10 17 8-21 11z" fill="#a8a8a8"/>
          <ellipse cx="1003" cy="498" rx="13" ry="19" fill="#777" stroke="#000" stroke-width="2"/>
          <path d="M1006 480l4 6M1010 480l4 8" stroke="#000" stroke-width="1.500"/>

          <!-- roof -->
          <g stroke="#000" stroke-width="2" stroke-linejoin="round">
            <path d="M621 530l138 79 1 8-139-79z" fill="#9b9b99"/>
            <path d="M759 609l292-168v7L760 617z" fill="#dedede"/>
            <path d="M913 362l138 79-292 168-138-79z" fill="#8f9292"/>
          </g>
          <path d="M765 622l285-165" stroke="#000" stroke-width="1.500"/>

          <!-- red volumes and canopies -->
          <g stroke="#f80808" stroke-width="2" stroke-linejoin="round">
            <path d="M600 660l27-15 2 20 3 11z" fill="#b81c20"/>
            <path d="M600 660l129 71v28l-130-72z" fill="#a5151a"/>
            <path d="M729 731l26-12v25l-26 15z" fill="#bb1b20"/>
            <path d="M760 870l7-4 19 11-7 4z" fill="#a5151a"/>
            <path d="M760 870l19 11v52l-19-11z" fill="#a5151a"/>
            <path d="M779 881l8-4v53l-8 3z" fill="#d01a1e"/>
          </g>
          <path d="M602 764l21-12 30 15v4l-21 10-30-14z" fill="#111" stroke="#000" stroke-width="2"/><path d="M604 764l19-11 28 14-19 10z" fill="#b0b0b0"/>
          <path d="M622 838l26 15v5l-26-15z" fill="#b8b8b8" stroke="#000" stroke-width="1.500"/>
          <path d="M622 775l-11 6 12 6M630 850l24 12" fill="none" stroke="#d2ae60" stroke-width="1.300"/>
          <path d="M1052 664l8 4" stroke="#e0a93a" stroke-width="3"/>
          <path d="M621 649v12M621 700v56M621 782v56" stroke="#000" stroke-width="2"/>

          <!-- gumball -->
          <g fill="none" stroke="#efe52f" stroke-width="1.600">
            <path d="M780 529L1075 358M897 427l60-34v67l-60 35z"/>
            <path d="M780 529l-9-12 23 4M1075 358l-22-4 7 13"/>
          </g>
          <path d="M912 362c-32-7-50 0-52 31 0 45 20 90 50 114 25 24 50 28 73 15M912 362c40 18 70 55 81 110" fill="none" stroke="#22e022" stroke-width="1.300" stroke-dasharray="1.500 2"/>
          <path d="M867 363l12-2-6 12zM963 411l8-7 4 14zM879 471l13 8-11 4zM974 525l8-10 5 10z" fill="#20f020"/>
          <path d="M936 439l44-25" stroke="#20e020" stroke-width="2.500"/><path d="M974 412l19-5-14 13z" fill="#20f020"/>
          <path d="M936 448l44 24" stroke="#ee2222" stroke-width="2.500"/><path d="M980 467l13 14-19-5z" fill="#f52222"/>
          <path d="M927 434v-48" stroke="#2222ee" stroke-width="2.500"/><path d="M921 386l6-18 6 18z" fill="#2222f5"/>
          <g fill="#fff" stroke="#222" stroke-width="1.300"><circle cx="780" cy="529" r="3"/><circle cx="927" cy="444" r="3.500"/><circle cx="1075" cy="358" r="3"/></g>

          <!-- axis icon -->
          <path d="M186 1069v30l25 14M186 1099l25-14" fill="none" stroke="#5d6166" stroke-width="1.200"/>
          <g class="axis"><text x="189" y="1071">z</text><text x="214" y="1084">y</text><text x="214" y="1114">x</text></g>
        </svg>
        <div class="viewport-title"><span>Parallel</span><button aria-label="Viewport menu"><svg viewBox="0 0 10 6"><path d="M0 0h10L5 6z"/></svg></button></div>
        <div class="angle"><input type="text" value="90" aria-label="Angle"></div>
      </div>
      <div class="viewport-tabs">
        <button class="active">Parallel</button><button>Top</button><button>Front</button><button>Left</button>
        <button aria-label="Add viewport"><svg viewBox="0 0 12 12"><path d="M4 1h4v3h3v4H8v3H4V8H1V4h3z" fill="#fff" stroke="#888"/></svg></button>
      </div>
    </section>

    <!-- Layers -->
    <section class="layers">
      <h2>Layers</h2>
      <div class="layer-tools">
        <button aria-label="New layer"><svg viewBox="0 0 28 28"><use href="#i-layer" width="23" height="23"/><path d="M20 13v12M14 19h12" stroke="#fff" stroke-width="6"/><path d="M20 13v12M14 19h12" stroke="#000" stroke-width="3"/></svg></button>
        <button aria-label="New sublayer"><svg viewBox="0 0 28 28"><use href="#i-layer" width="17" height="17"/><path d="M5 16v8h6" stroke="#000" stroke-width="2" fill="none"/><path d="M11 13l7 4 8-3v8l-8 5-6-4z" fill="#8c9fe8" stroke="#111" stroke-width="1.500"/></svg></button>
        <button aria-label="Delete layer"><svg viewBox="0 0 28 28"><path d="M4 4l20 21M24 3L4 25" stroke="#c3141c" stroke-width="4.500"/></svg></button>
        <button aria-label="Match layer"><svg viewBox="0 0 28 28"><path d="M16 2C2 0-2 20 10 24" fill="none" stroke="#222" stroke-width="2.500"/><use href="#i-layer" x="6" y="5" width="22" height="22"/></svg></button>
        <button aria-label="Move up"><svg viewBox="0 0 28 28"><path d="M14 5l12 14H2z" class="b"/></svg></button>
        <button aria-label="Move down"><svg viewBox="0 0 28 28"><path d="M14 22L2 8h24z" class="b"/></svg></button>
        <button aria-label="Move out"><svg viewBox="0 0 28 28"><path d="M20 2v24L5 14z" fill="#ddd" stroke="#999" stroke-width="1.500"/></svg></button>
        <button aria-label="Filter"><svg viewBox="0 0 28 28"><path d="M2 2h24l-9 11v11l-6 3V13z" class="b"/></svg></button>
        <button aria-label="Columns"><svg viewBox="0 0 28 28"><path d="M3 2h22v24H3z" fill="#fff" stroke="#555" stroke-width="1.500"/><path d="M3 4h22" stroke="#555" stroke-width="4"/><path d="M8 2v24M14 2v24M20 2v24M3 11h22M3 16h22M3 21h22" stroke="#555" stroke-width="1.300"/></svg></button>
        <button aria-label="Menu"><svg viewBox="0 0 28 28"><path d="M3 4h22M3 14h22M3 24h22" stroke="#000" stroke-width="3"/></svg></button>
        <button aria-label="Help"><svg><use href="#i-help"/></svg></button>
      </div>
      <div class="search">
        <svg viewBox="0 0 16 16"><circle cx="7" cy="6" r="5" fill="none" stroke="#333" stroke-width="1.500"/><path d="M10 10l5 5" stroke="#333" stroke-width="1.500"/></svg>
        <input type="search" placeholder="Search" aria-label="Search">
      </div>
      <div class="layer-list">
        <table>
          <colgroup><col><col class="c-check"><col class="c-icon"><col class="c-icon"><col class="c-icon"><col class="c-material"><col class="c-line"></colgroup>
          <thead><tr><th>Layer</th><th></th><th></th><th></th><th></th><th>Material</th><th>Line</th></tr></thead>
          <tbody id="layer-rows"></tbody>
        </table>
        <div class="scrollbar"></div>
      </div>
    </section>

    <!-- Panel tabs -->
    <nav class="panel-tabs">
      <div class="current"><svg class="gear"><use href="#i-gear"/></svg><svg><use href="#i-layer"/></svg></div>
      <button aria-label="Properties"><svg><use href="#i-wheel"/></svg></button>
      <button aria-label="Display"><svg viewBox="0 0 28 28"><path d="M1 3h26v18H1z" fill="url(#grey)" stroke="#222" stroke-width="2"/><path d="M11 21h6v5h-6z" fill="#222"/><path d="M8 26h12" stroke="#222" stroke-width="2"/></svg></button>
      <button aria-label="Help"><svg viewBox="0 0 28 28"><path d="M1 1h26v26H1z" fill="#fff" stroke="#444" stroke-width="1.500"/><path d="M1 1h26v4H1z" fill="#24449f"/><use href="#i-help" x="4" y="5" width="20" height="20"/></svg></button>
      <button aria-label="Snapshots"><svg viewBox="0 0 28 28"><path d="M2 8h5l3-4h10l2 4h5v17H2z" fill="#444" stroke="#111"/><circle cx="15" cy="16" r="6" fill="#888" stroke="#111" stroke-width="2"/><circle cx="15" cy="16" r="2.500" fill="#222"/></svg></button>
      <button aria-label="Rendering"><svg viewBox="0 0 28 28"><use href="#i-ball" y="5" width="23" height="23"/><path d="M14 7l5-5h8v6l-8 2z" fill="#fff" stroke="#111" stroke-width="1.500"/></svg></button>
    </nav>
  </main>

  <!-- Status bar -->
  <footer class="status">
    <button class="side-toggle" aria-label="Left sidebar"><svg viewBox="0 0 16 16"><path d="M1 1h14v14H1z" fill="#fff" stroke="#3b3b3b" stroke-width="2"/><path d="M1 1h6v14H1z" fill="#3b3b3b"/></svg></button>
    <span class="cell cplane">CPlane</span>
    <span class="cell">x 0.98</span>
    <span class="cell wide">y 13.55</span>
    <span class="cell">z 0</span>
    <span class="cell units">Meters</span>
    <span class="cell current-layer"><i></i>Default</span>
    <button class="toggle">Grid Snap</button>
    <button class="toggle on">Ortho</button>
    <button class="toggle">Planar</button>
    <button class="toggle on">Osnap</button>
    <button class="toggle on">SmartTrack</button>
    <button class="toggle on">Gumball (CPlane)</button>
    <svg class="lock" viewBox="0 0 12 16"><path d="M3 7V4c0-4 6-4 6 0v3M1 7h10v8H1z" fill="none" stroke="#999" stroke-width="1.300"/></svg>
    <span class="info">Auto CPlane (Object)</span>
    <span class="info">Record History</span>
    <span class="info">Filter</span>
    <span class="info">Absolute tolerance: 0.01</span>
    <button class="side-toggle right" aria-label="Right sidebar"><svg viewBox="0 0 16 16"><path d="M1 1h14v14H1z" fill="#fff" stroke="#3b3b3b" stroke-width="2"/><path d="M10 1h5v14h-5z" fill="#3b3b3b"/></svg></button>
  </footer>

  <script>
    // name, color class, indent level, has children, line type
    const layers = [
      ["Default", "black", 0, false, "Continuous"],
      ["Layer 01", "darkred", 0, false, "Continuous"],
      ["seccion", "cyan", 0, false, "Continuous"],
      ["carpinteria", "tan", 0, false, "Continuous"],
      ["proyeccion", "red", 0, false, "Continuous"],
      ["auxiliar", "blue", 0, false, "Continuous"],
      ["ventanas", "glass", 0, false, "Continuous"],
      ["discontinua", "lime", 0, false, "DASHED"],
      ["vegetacion", "lime", 0, false, "Continuous"],
      ["0", "black", 0, false, "Continuous"],
      ["Defpoints", "black", 0, false, "Continuous"],
      ["esscaleras", "lime", 0, false, "Continuous"],
      ["muros cortadoss", "yellow", 0, false, "Continuous"],
      ["arcos guias escaleras", "yellow", 0, false, "Continuous"],
      ["muross", "magenta", 0, false, "Continuous"],
      ["Make2D", "black", 0, true, "Continuous"],
      ["Visible", "black", 1, true, "Continuous"],
      ["Curves", "black", 2, false, "Continuous"],
      ["Hidden", "gray", 1, true, "Continuous"],
      ["Curves", "gray", 2, false, "Continuous"]
    ];

    const check = '<svg class="check" viewBox="0 0 16 12"><path d="M1 6l4 4L15 1" fill="none" stroke="#111" stroke-width="1.500"/></svg>';
    const bulb = '<svg class="bulb"><use href="#i-bulb"/></svg>';
    const lock = '<svg class="unlock"><use href="#i-unlock"/></svg>';

    document.getElementById("layer-rows").innerHTML = layers.map(function(layer) {
      const current = layer[0] === "Default";
      const selected = layer[0] === "ventanas";
      const rowClass = current ? "current" : selected ? "selected" : "";
      return '<tr class="' + rowClass + '">' +
        '<td class="name level-' + layer[2] + (layer[3] ? " open" : "") + '">' + layer[0] + '</td>' +
        '<td>' + (current ? check : "") + '</td>' +
        '<td>' + (current ? "" : bulb) + '</td>' +
        '<td>' + (current ? "" : lock) + '</td>' +
        '<td><span class="swatch ' + layer[1] + '"></span></td>' +
        '<td class="material"><span class="dot"></span>' + (selected ? "Plastic" : "") + '</td>' +
        '<td class="line">' + layer[4] + '</td></tr>';
    }).join("");
  </script>
</body>
</html>
```

FILE: styles.css
```css
* {
  box-sizing: border-box;
}

body {
  margin: 0;
  min-height: 100vh;
  display: flex;
  flex-direction: column;
  background-color: #e9ebee;
  color: #3a3a3a;
  font-family: "Open Sans", "Noto Sans", sans-serif;
  font-size: 13px;
  line-height: 20px;
}

button, input {
  font: inherit;
  color: inherit;
  border: none;
  background: none;
  padding: 0;
  margin: 0;
}

h2, p {
  margin: 0;
  font-size: 13px;
  font-weight: normal;
}

svg {
  display: block;
}

.defs {
  position: absolute;
  width: 0;
  height: 0;
}

/* Icon fills */
.k {
  fill: none;
  stroke: #000;
  stroke-width: 1.5;
}

.w {
  fill: #fff;
  stroke: #000;
  stroke-width: 1.3;
}

.b {
  fill: url(#blue);
  stroke: #0c1840;
  stroke-width: 1.3;
}

.pts {
  marker: url(#node);
}

/* Title bar and menu */
.titlebar {
  height: 26px;
  display: flex;
  justify-content: space-between;
  align-items: center;
  padding-left: 1px;
}

.logo {
  width: 20px;
  height: 19px;
}

.window-buttons {
  display: flex;
  gap: 8px;
  padding-right: 5px;
}

.window-buttons button {
  width: 46px;
  height: 26px;
  display: flex;
  align-items: center;
  justify-content: center;
}

.window-buttons svg {
  width: 14px;
  height: 14px;
  fill: none;
  stroke: #555;
}

.menu {
  height: 24px;
  display: flex;
  gap: 18px;
  padding: 1px 8px;
}

.menu a {
  color: #3a3a3a;
  text-decoration: none;
}

/* Command area */
.grip {
  width: 12px;
  display: flex;
  flex-direction: column;
  align-items: center;
  justify-content: center;
  gap: 4px;
}

.grip i {
  width: 3px;
  height: 3px;
  border-radius: 2px;
  background-color: #b4b7bc;
}

.grip.horizontal {
  width: auto;
  height: 9px;
  flex-direction: row;
  border-bottom: 1px solid #dcdee2;
}

.command {
  height: 120px;
  display: flex;
  border-bottom: 2px solid #d8dade;
}

.command .grip {
  margin-left: 1px;
}

.command-main {
  flex: 1;
  background-color: #fff;
  color: #1e1e1e;
}

.history {
  height: 97px;
  display: flex;
  flex-direction: column;
  justify-content: flex-end;
  padding-left: 2px;
  overflow: hidden;
  line-height: 19px;
  border-bottom: 1px solid #c9ccd2;
}

.prompt {
  display: flex;
  height: 22px;
  padding-left: 2px;
  font-weight: bold;
  color: #000;
}

.prompt input {
  flex: 1;
}

.command-scroll {
  width: 21px;
  display: flex;
  flex-direction: column;
  align-items: center;
  justify-content: space-between;
}

.command-scroll .thumb {
  width: 4px;
  height: 20px;
  margin-top: 55px;
  border-radius: 2px;
  background-color: #8a8a8a;
}

.command-scroll svg {
  width: 12px;
  height: 20px;
}

/* Tabs and toolbar */
.toolbars {
  display: flex;
  height: 64px;
}

.toolbars-main {
  flex: 1;
  min-width: 0;
}

.tabs {
  height: 24px;
  display: flex;
  align-items: flex-end;
  background-color: #d8dade;
  white-space: nowrap;
}

.tab {
  height: 22px;
  padding: 0 12px;
  color: #75777a;
}

.tab.active {
  padding: 0 14px;
  color: #3a3a3a;
  background-color: #e9ebee;
  border-radius: 5px 5px 0 0;
}

.tab-gear {
  width: 14px;
  height: 14px;
  margin: auto 7px auto auto;
}

.toolbar {
  width: 1084px;
  margin-left: 2px;
  display: grid;
  grid-template-columns: repeat(33, 1fr);
}

.tool {
  position: relative;
  height: 33px;
  display: flex;
  align-items: center;
  justify-content: center;
}

.tool svg {
  width: 27px;
  height: 27px;
}

.tool.more::after {
  content: "";
  position: absolute;
  right: 0;
  bottom: 0;
  border-left: 6px solid transparent;
  border-bottom: 6px solid #6d6f73;
}

/* Workspace */
.workspace {
  flex: 1;
  display: flex;
  border-top: 4px solid #d8dade;
  background-color: #d8dade;
}

.sidebar {
  width: 138px;
  margin: 0 4px 0 2px;
  background-color: #e9ebee;
}

.side-tools {
  height: 455px;
  padding-right: 6px;
  display: grid;
  grid-template-columns: repeat(4, 33px);
  align-content: start;
}

.filters {
  border-top: 1px solid #d8dade;
}

.filters h2 {
  height: 24px;
  display: flex;
  justify-content: space-between;
  align-items: center;
  padding: 0 5px 0 1px;
  color: #66686b;
}

.filters h2 svg {
  width: 15px;
  height: 15px;
}

.filter-tabs {
  height: 23px;
  display: flex;
  background-color: #d8dade;
}

.filter-tabs button {
  width: 42px;
  display: flex;
  align-items: center;
  justify-content: center;
}

.filter-tabs .active {
  background-color: #e9ebee;
  border-radius: 5px 5px 0 0;
}

.filter-tabs svg {
  width: 18px;
  height: 18px;
}

.filter-list {
  height: 307px;
  margin-top: 3px;
  padding-left: 5px;
  display: grid;
  grid-auto-rows: 1fr;
}

.filter-list label {
  display: flex;
  align-items: center;
  gap: 6px;
  color: #333;
}

.filter-list .off {
  color: #75777a;
}

.filter-list input {
  appearance: none;
  width: 16px;
  height: 16px;
  border: 1px solid #b9bfda;
  background-color: #fff;
  display: flex;
  align-items: center;
  justify-content: center;
}

.filter-list .off input {
  background-color: #e9ebee;
}

.filter-list input:checked::before {
  content: "";
  width: 5px;
  height: 9px;
  margin-bottom: 2px;
  border: solid #1b1b1b;
  border-width: 0 2px 2px 0;
  transform: rotate(40deg);
}

.filter-list .off input:checked::before {
  border-color: #555;
}

/* Viewport */
.center {
  flex: 1;
  min-width: 0;
  display: flex;
  flex-direction: column;
}

.viewport {
  position: relative;
  flex: 1;
  overflow: hidden;
  background-color: #9ba2aa;
}

.scene {
  position: absolute;
  width: 100%;
  height: 100%;
}

.axis {
  font-size: 16px;
  fill: #5d6166;
}

.viewport-title {
  position: absolute;
  top: 0;
  left: 0;
  width: 76px;
  height: 21px;
  display: flex;
  justify-content: space-between;
  padding-left: 7px;
  font-weight: bold;
  color: #12305f;
  background-color: #6ea2f8;
}

.viewport-title button {
  width: 14px;
  display: flex;
  align-items: center;
  justify-content: center;
  border-left: 1px solid #34568f;
}

.viewport-title svg {
  width: 9px;
  height: 6px;
}

.angle {
  position: absolute;
  left: 760px;
  top: 247px;
  width: 181px;
  height: 30px;
  background-color: #fff;
  border: 1px solid #7d8fa8;
}

.angle input {
  width: 100%;
  height: 24px;
  padding-left: 2px;
}

.angle::after {
  content: "";
  position: absolute;
  left: 18px;
  top: 2px;
  width: 1px;
  height: 19px;
  background-color: #000;
}

.viewport-tabs {
  height: 26px;
  display: flex;
  align-items: flex-start;
}

.viewport-tabs button {
  height: 24px;
  padding: 0 9px;
  color: #75777a;
}

.viewport-tabs .active {
  padding: 0 9px 0 11px;
  color: #222;
  background-color: #eef0f3;
  border-radius: 0 0 3px 3px;
}

.viewport-tabs svg {
  width: 12px;
  height: 12px;
}

/* Layers panel */
.layers {
  width: 424px;
  margin-left: 4px;
  padding-right: 4px;
  background-color: #e9ebee;
  display: flex;
  flex-direction: column;
}

.layers h2 {
  height: 21px;
  color: #66686b;
  border-bottom: 1px solid #dddfe3;
}

.layer-tools {
  width: 283px;
  height: 38px;
  display: grid;
  grid-template-columns: repeat(11, 1fr);
}

.layer-tools button {
  display: flex;
  align-items: center;
  justify-content: center;
}

.layer-tools svg {
  width: 17px;
  height: 17px;
}

.search {
  height: 28px;
  display: flex;
  align-items: center;
  gap: 3px;
  padding: 0 5px;
  background-color: #fff;
  border: 1px solid #b9bfda;
  border-radius: 14px;
}

.search svg {
  width: 14px;
  height: 15px;
}

.search input {
  flex: 1;
}

.search input::placeholder {
  color: #77797c;
}

.layer-list {
  flex: 1;
  margin-top: 6px;
  display: flex;
  flex-direction: column;
  justify-content: space-between;
  background-color: #fff;
}

table {
  width: 100%;
  table-layout: fixed;
  border-collapse: separate;
  border-spacing: 0;
}

.c-check, .c-icon {
  width: 24px;
}

.c-material {
  width: 93px;
}

.c-line {
  width: 28px;
}

th {
  height: 28px;
  padding: 0 6px;
  font-weight: normal;
  text-align: left;
  overflow: hidden;
  border-right: 1px solid #e2e5ea;
  border-bottom: 1px solid #dfe2e7;
}

th:last-child {
  border-right: none;
}

td {
  height: 23px;
  padding: 0;
  overflow: hidden;
  white-space: nowrap;
  border-bottom: 1px solid #e2e5ea;
}

td svg, .swatch {
  margin: 0 auto;
}

td.name {
  padding-left: 20px;
  border-bottom-style: dotted;
}

td.level-1 {
  padding-left: 39px;
}

td.level-2 {
  padding-left: 57px;
}

td.open::before {
  content: "";
  display: inline-block;
  width: 0;
  margin: 0 6px 0 -14px;
  border-left: 8px solid transparent;
  border-bottom: 8px solid #222;
}

tr.current {
  font-weight: bold;
  color: #111;
}

tr.selected td {
  background-color: #6cb8fd;
  border-color: #6cb8fd;
}

.check {
  width: 16px;
  height: 12px;
}

.bulb {
  width: 11px;
  height: 16px;
}

.unlock {
  width: 16px;
  height: 16px;
}

.swatch {
  display: block;
  width: 18px;
  height: 18px;
  border: 1px solid #222;
}

.black { background-color: #000; }
.darkred { background-color: #c80000; }
.cyan { background: repeating-conic-gradient(#2fcfd2 0 25%, #5ff5f5 0 50%); }
.tan { background-color: #dcbc66; }
.red { background-color: #f00; }
.blue { background-color: #00f; }
.glass { background: repeating-conic-gradient(#6479ad 0 25%, #a9b8dc 0 50%); }
.lime { background-color: #0f0; }
.yellow { background-color: #ff0; }
.magenta { background-color: #f0f; }
.gray { background-color: #8c8c8c; }

.dot {
  display: inline-block;
  width: 16px;
  height: 16px;
  margin: 0 4px 0 2px;
  vertical-align: -3px;
  border: 1px solid #555;
  border-radius: 50%;
  background-color: #fff;
}

.selected .dot {
  background-color: #777;
  border-color: #333;
}

.line {
  padding-left: 3px;
}

.scrollbar {
  width: 221px;
  height: 9px;
  margin: 0 0 6px 9px;
  border-radius: 5px;
  background-color: #c3c3c3;
}

/* Right panel tabs */
.panel-tabs {
  width: 25px;
  padding-right: 2px;
  display: flex;
  flex-direction: column;
  align-items: center;
}

.panel-tabs svg {
  width: 17px;
  height: 17px;
}

.panel-tabs .current {
  width: 100%;
  height: 63px;
  display: flex;
  flex-direction: column;
  align-items: center;
  gap: 17px;
  padding-top: 2px;
  background-color: #e9ebee;
  border-radius: 0 5px 5px 0;
}

.panel-tabs .gear {
  width: 14px;
  height: 14px;
}

.panel-tabs button {
  height: 42px;
  display: flex;
  align-items: center;
}

/* Status bar */
.status {
  height: 26px;
  display: flex;
  align-items: center;
  padding: 0 8px;
  white-space: nowrap;
  color: #4b4d50;
  border-bottom: 1px solid #dcdee2;
}

.side-toggle svg {
  width: 16px;
  height: 16px;
}

.side-toggle.right {
  margin-left: auto;
}

.cell {
  width: 96px;
}

.cell.cplane {
  margin-left: 24px;
  width: 98px;
}

.cell.wide {
  width: 114px;
}

.cell.units {
  width: 85px;
}

.cell.current-layer {
  width: 222px;
  display: flex;
  align-items: center;
  gap: 8px;
}

.current-layer i {
  width: 19px;
  height: 19px;
  background-color: #000;
}

.toggle {
  height: 22px;
  margin-right: 3px;
  padding: 0 10px;
}

.toggle.on {
  font-weight: bold;
  color: #1c2330;
  background-color: #d0d8ee;
  border-radius: 3px;
}

.lock {
  width: 12px;
  height: 16px;
  margin: 0 11px 2px 10px;
}

.info {
  margin-right: 30px;
}
```
